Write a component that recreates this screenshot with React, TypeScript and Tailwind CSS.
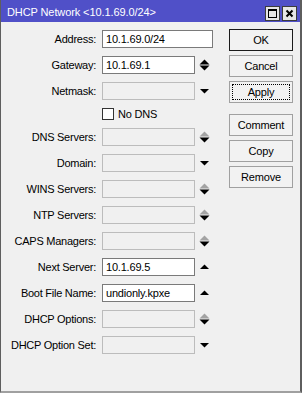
import React from "react";

type ArrowKind = "none" | "updown" | "down" | "up" | "grayupdown";

function Arrow({ kind }: { kind: ArrowKind }) {
  if (kind === "none") return <div className="w-[11px]" />;
  if (kind === "down")
    return (
      <svg width="11" height="12" viewBox="0 0 11 12" className="block">
        <polygon points="1,4 10,4 5.5,8.5" fill="#000" />
      </svg>
    );
  if (kind === "up")
    return (
      <svg width="11" height="12" viewBox="0 0 11 12" className="block">
        <polygon points="1,8 10,8 5.5,3.5" fill="#000" />
      </svg>
    );
  const upColor = kind === "grayupdown" ? "#a3a3a3" : "#000";
  return (
    <svg width="11" height="12" viewBox="0 0 11 12" className="block">
      <polygon points="0.5,5.5 10.5,5.5 5.5,0.5" fill={upColor} />
      <polygon points="0.5,6.5 10.5,6.5 5.5,11.5" fill="#000" />
    </svg>
  );
}

function Row({
  label,
  value,
  wide,
  arrow,
  disabled,
}: {
  label: string;
  value?: string;
  wide?: boolean;
  arrow: ArrowKind;
  disabled?: boolean;
}) {
  return (
    <div className="flex items-center h-[18px]">
      <div className="w-[101px] pr-[6px] text-right whitespace-nowrap leading-[18px] tracking-[-0.25px]">{label}</div>
      <div
        className={
          (wide ? "w-[111px] " : "w-[93px] ") +
          (disabled
            ? "bg-[#f0f0f0] border-[#bcbcbc] "
            : "bg-white border-[#7a7a7a] ") +
          "h-[18px] border pl-[3px] leading-[16px] whitespace-nowrap tracking-[-0.2px]"
        }
      >
        {value}
      </div>
      {!wide && (
        <div className="ml-[4px] flex items-center">
          <Arrow kind={arrow} />
        </div>
      )}
    </div>
  );
}

function Btn({ children, primary, focus }: { children: React.ReactNode; primary?: boolean; focus?: boolean }) {
  return (
    <div
      className={
        "relative w-[64px] h-[22px] border bg-[#f2f2f2] flex items-center justify-center leading-none tracking-[-0.2px] " +
        (primary ? "border-[#1a1a1a]" : "border-[#a0a0a0]")
      }
    >
      {focus && <div className="absolute inset-[2px] border border-dotted border-black" />}
      <span className="relative">{children}</span>
    </div>
  );
}

export default function App() {
  return (
    <div
      className="w-[302px] h-[393px] bg-[#f0f0f0] border-l border-l-[#5e5e5e] border-r-2 border-r-[#5e5e5e] border-b-2 border-b-[#a0a0a0] flex flex-col text-[11px] text-black overflow-hidden"
      style={{ fontFamily: '"Liberation Sans", Arial, sans-serif' }}
    >
      <div className="h-[22px] bg-[#5050c8] flex items-center justify-between pl-[6px] pr-[3px] shrink-0">
        <span className="text-white text-[11px] leading-none mt-[2px] tracking-[-0.1px]">DHCP Network &lt;10.1.69.0/24&gt;</span>
        <div className="flex gap-[2px] mt-[4px]">
          <div className="w-[15px] h-[15px] bg-[#e6e6e6] border border-[#3c3c3c] flex items-center justify-center">
            <div className="w-[9px] h-[9px] border border-black border-t-2" />
          </div>
          <div className="w-[15px] h-[15px] bg-[#e6e6e6] border border-[#3c3c3c] flex items-center justify-center">
            <svg width="9" height="9" viewBox="0 0 9 9">
              <path d="M1.5 1.5 L7.5 7.5 M7.5 1.5 L1.5 7.5" stroke="#000" strokeWidth="2" />
            </svg>
          </div>
        </div>
      </div>
      <div className="flex">
        <div className="w-[228px] pt-[8px] flex flex-col gap-[8px]">
          <Row label="Address:" value="10.1.69.0/24" wide arrow="none" />
          <Row label="Gateway:" value="10.1.69.1" arrow="updown" />
          <Row label="Netmask:" arrow="down" disabled />
          <div className="flex items-center h-[12px]">
            <div className="w-[101px]" />
            <div className="w-[12px] h-[12px] bg-white border border-[#333]" />
            <span className="ml-[4px] leading-none tracking-[-0.2px]">No DNS</span>
          </div>
          <Row label="DNS Servers:" arrow="grayupdown" disabled />
          <Row label="Domain:" arrow="down" disabled />
          <Row label="WINS Servers:" arrow="grayupdown" disabled />
          <Row label="NTP Servers:" arrow="grayupdown" disabled />
          <Row label="CAPS Managers:" arrow="grayupdown" disabled />
          <Row label="Next Server:" value="10.1.69.5" arrow="up" />
          <Row label="Boot File Name:" value="undionly.kpxe" arrow="up" />
          <Row label="DHCP Options:" arrow="grayupdown" disabled />
          <Row label="DHCP Option Set:" arrow="down" disabled />
        </div>
        <div className="pt-[7px] flex flex-col">
          <div className="flex flex-col gap-[4px]">
            <Btn primary>OK</Btn>
            <Btn>Cancel</Btn>
            <Btn focus>Apply</Btn>
          </div>
          <div className="flex flex-col gap-[4px] mt-[11px]">
            <Btn>Comment</Btn>
            <Btn>Copy</Btn>
            <Btn>Remove</Btn>
          </div>
        </div>
      </div>
    </div>
  );
}
